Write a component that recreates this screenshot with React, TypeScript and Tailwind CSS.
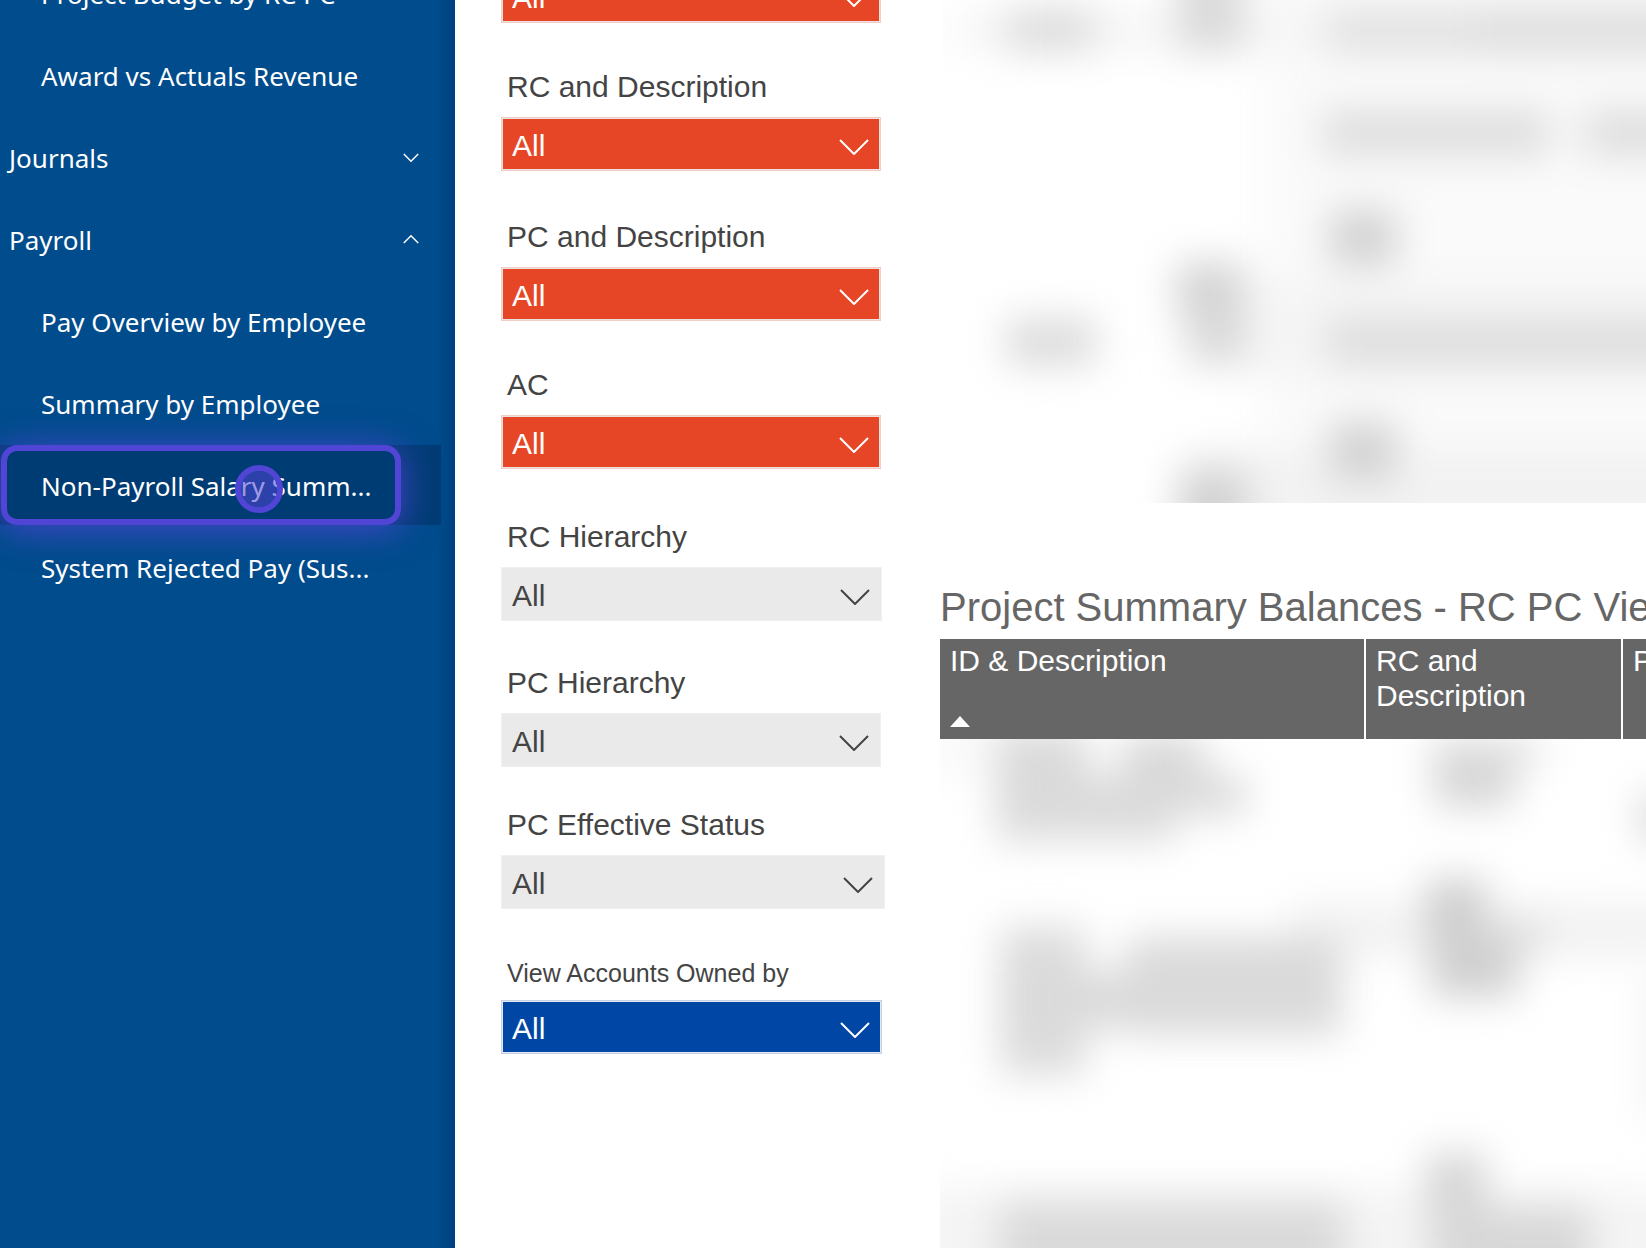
import React from "react";

type Bar = [x: number, y: number, w: number, h: number, fill: string];

const upperBars: Bar[] = [
  [320, -60, 480, 640, "#fafafa"],
  [10, 12, 60, 36, "#f6f6f6"],
  [150, 8, 240, 44, "#f6f6f6"],
  [64, 8, 88, 44, "#dcdcdc"],
  [236, -40, 66, 92, "#dadada"],
  [384, 8, 420, 46, "#e2e2e2"],
  [530, 8, 270, 46, "#dedede"],
  [380, 110, 228, 46, "#dedede"],
  [642, 110, 140, 46, "#dedede"],
  [388, 210, 66, 56, "#d2d2d2"],
  [300, 280, 480, 96, "#f5f5f5"],
  [234, 262, 68, 56, "#d4d4d4"],
  [244, 314, 60, 50, "#dadada"],
  [64, 318, 90, 48, "#dcdcdc"],
  [384, 318, 420, 48, "#dedede"],
  [246, 450, 560, 120, "#f2f2f2"],
  [388, 422, 66, 58, "#d2d2d2"],
  [236, 470, 68, 90, "#d2d2d2"],
];

const lowerBars: Bar[] = [
  [-20, -40, 80, 80, "#fafafa"],
  [56, -10, 92, 110, "#dadada"],
  [182, -4, 82, 56, "#d8d8d8"],
  [56, 36, 250, 40, "#dadada"],
  [56, 70, 180, 32, "#dcdcdc"],
  [490, -2, 112, 28, "#e2e2e2"],
  [494, 16, 80, 52, "#d6d6d6"],
  [700, 54, 60, 50, "#dcdcdc"],
  [350, 164, 450, 54, "#f2f2f2"],
  [60, 188, 86, 148, "#dcdcdc"],
  [186, 198, 216, 98, "#dadada"],
  [60, 232, 340, 58, "#dadada"],
  [486, 140, 60, 64, "#cecece"],
  [540, 178, 66, 38, "#e2e2e2"],
  [490, 200, 88, 58, "#d0d0d0"],
  [704, 240, 60, 140, "#f2f2f2"],
  [-20, 450, 820, 120, "#f4f4f4"],
  [60, 462, 344, 110, "#dadada"],
  [486, 414, 60, 60, "#d6d6d6"],
  [490, 468, 160, 110, "#d8d8d8"],
];

function BlurredRows({ id, bars, className }: { id: string; bars: Bar[]; className: string }) {
  return (
    <svg aria-hidden="true" className={className} preserveAspectRatio="xMinYMin">
      <filter
        id={id}
        x="-100"
        y="-100"
        width="1000"
        height="800"
        filterUnits="userSpaceOnUse"
        colorInterpolationFilters="sRGB"
      >
        <feGaussianBlur stdDeviation="19" />
      </filter>
      <g filter={`url(#${id})`}>
        {bars.map(([x, y, w, h, fill], i) => (
          <rect key={i} x={x} y={y} width={w} height={h} fill={fill} />
        ))}
      </g>
    </svg>
  );
}

function NavChevron({ up }: { up?: boolean }) {
  return (
    <svg aria-hidden="true" className="h-4 w-4" viewBox="0 0 16 16" fill="none" stroke="currentColor" strokeWidth="1.5">
      <path d={up ? "M.8 11 8 3.8 15.2 11" : "M.8 4 8 11.2 15.2 4"} />
    </svg>
  );
}

function NavLink({ children }: { children: React.ReactNode }) {
  return (
    <a href="#" className="flex h-20 items-center pt-0.5 pl-[41px] whitespace-nowrap">
      {children}
    </a>
  );
}

function NavGroup({ label, open }: { label: string; open?: boolean }) {
  return (
    <button
      type="button"
      aria-expanded={!!open}
      className="flex h-20 w-full items-center justify-between pt-0.5 pr-9 pl-[9px]"
    >
      {label}
      <NavChevron up={open} />
    </button>
  );
}

const tones = {
  orange: "border border-[#f2cdc5] bg-[#e74626] text-white shadow-[inset_0_0_0_1px_#e9e2e1]",
  gray: "border border-[#f0f0f0] bg-[#eaeaea] text-[#444444]",
  blue: "border border-[#c4d0e6] bg-[#0047a5] text-white shadow-[inset_0_0_0_1px_#e4e7ee]",
};

interface FilterProps {
  id: string;
  label: string;
  tone: keyof typeof tones;
  gap?: string;
  width?: string;
  labelStyle?: string;
}

function Filter({
  id,
  label,
  tone,
  gap = "",
  width = "w-[380px]",
  labelStyle = "mb-3 h-9 text-[30px] leading-9",
}: FilterProps) {
  return (
    <div className={gap}>
      <label htmlFor={id} className={`block pl-1.5 whitespace-nowrap text-[#444444] ${labelStyle}`}>
        {label}
      </label>
      <div className={`relative h-[54px] ${width}`}>
        <select
          id={id}
          defaultValue="All"
          className={`block h-full w-full appearance-none rounded-none pt-[3px] pl-2.5 text-[30px] leading-9 ${tones[tone]}`}
        >
          <option>All</option>
        </select>
        <svg
          aria-hidden="true"
          className={`pointer-events-none absolute top-[22px] right-3 h-4 w-[30px] ${tone === "gray" ? "text-[#444444]" : "text-white"}`}
          viewBox="0 0 30 16"
          fill="none"
          stroke="currentColor"
          strokeWidth="2"
        >
          <path d="M1 1 15 15 29 1" />
        </svg>
      </div>
    </div>
  );
}

export default function App() {
  return (
    <div className="flex h-screen overflow-hidden bg-white font-['Liberation_Sans',Arial,sans-serif]">
      <nav className="w-[455px] shrink-0 bg-linear-to-r from-[#004c8c] from-96% to-[#00417f] font-['Noto_Sans','Open_Sans',sans-serif] text-[26px] text-white">
        <div className="-mt-[47px] flex flex-col gap-0.5">
          <NavLink>Project Budget by RC PC</NavLink>
          <NavLink>Award vs Actuals Revenue</NavLink>
          <NavGroup label="Journals" />
          <NavGroup label="Payroll" open />
          <NavLink>Pay Overview by Employee</NavLink>
          <NavLink>Summary by Employee</NavLink>
          <div className="relative mr-3.5 bg-[#003c74]">
            <NavLink>Non-Payroll Salary Summ...</NavLink>
            <div className="pointer-events-none absolute inset-y-0 left-px w-[400px] rounded-2xl border-[6px] border-[#5145d6] shadow-[0_4px_36px_rgba(81,69,214,0.9)]" />
            <div className="pointer-events-none absolute top-5 left-[235px] h-12 w-12 rounded-full border-[6px] border-[#5145d6] bg-[#5145d6]/55 bg-clip-padding" />
          </div>
          <NavLink>System Rejected Pay (Sus...</NavLink>
        </div>
      </nav>

      <aside className="w-[485px] shrink-0 pl-[46px]">
        <div className="-mt-[79px] flex flex-col">
          <Filter id="fund" label="Fund" tone="orange" />
          <Filter id="rc-desc" label="RC and Description" tone="orange" gap="mt-[46px]" />
          <Filter id="pc-desc" label="PC and Description" tone="orange" gap="mt-12" />
          <Filter id="ac" label="AC" tone="orange" gap="mt-[46px]" />
          <Filter id="rc-hier" label="RC Hierarchy" tone="gray" gap="mt-[50px]" width="w-[381px]" />
          <Filter id="pc-hier" label="PC Hierarchy" tone="gray" gap="mt-11" />
          <Filter id="pc-status" label="PC Effective Status" tone="gray" gap="mt-10" width="w-[384px]" />
          <Filter
            id="owned-by"
            label="View Accounts Owned by"
            tone="blue"
            gap="mt-[49px]"
            width="w-[381px]"
            labelStyle="mb-3 h-[30px] text-[25px] leading-[30px]"
          />
        </div>
      </aside>

      <main className="min-w-0 flex-1 overflow-hidden">
        <BlurredRows id="blur-upper" bars={upperBars} className="ml-0.5 block h-[503px] w-full" />
        <h2 className="mt-20 mb-2 text-[40px] leading-[48px] whitespace-nowrap text-[#666666]">
          Project Summary Balances - RC PC View
        </h2>
        <table className="w-full table-fixed border-collapse">
          <colgroup>
            <col className="w-[425px]" />
            <col className="w-[257px]" />
            <col />
          </colgroup>
          <thead>
            <tr className="bg-[#666666] text-left align-top text-[30px] leading-[35px] text-white">
              <th scope="col" aria-sort="ascending" className="h-[100px] border-r-2 border-white p-0 pt-1 pl-2.5 font-normal">
                ID &amp; Description
                <svg aria-hidden="true" className="mt-[38px] block h-[11px] w-5" viewBox="0 0 20 11" fill="currentColor">
                  <path d="M10 0 20 11H0z" />
                </svg>
              </th>
              <th scope="col" className="border-r-2 border-white p-0 pt-1 pl-2.5 font-normal">
                RC and
                <br />
                Description
              </th>
              <th scope="col" className="overflow-hidden p-0 pt-1 pl-2.5 font-normal whitespace-nowrap">
                PC
              </th>
            </tr>
          </thead>
          <tbody>
            <tr>
              <td colSpan={3} className="p-0">
                <BlurredRows id="blur-lower" bars={lowerBars} className="block h-[509px] w-full" />
              </td>
            </tr>
          </tbody>
        </table>
      </main>
    </div>
  );
}
